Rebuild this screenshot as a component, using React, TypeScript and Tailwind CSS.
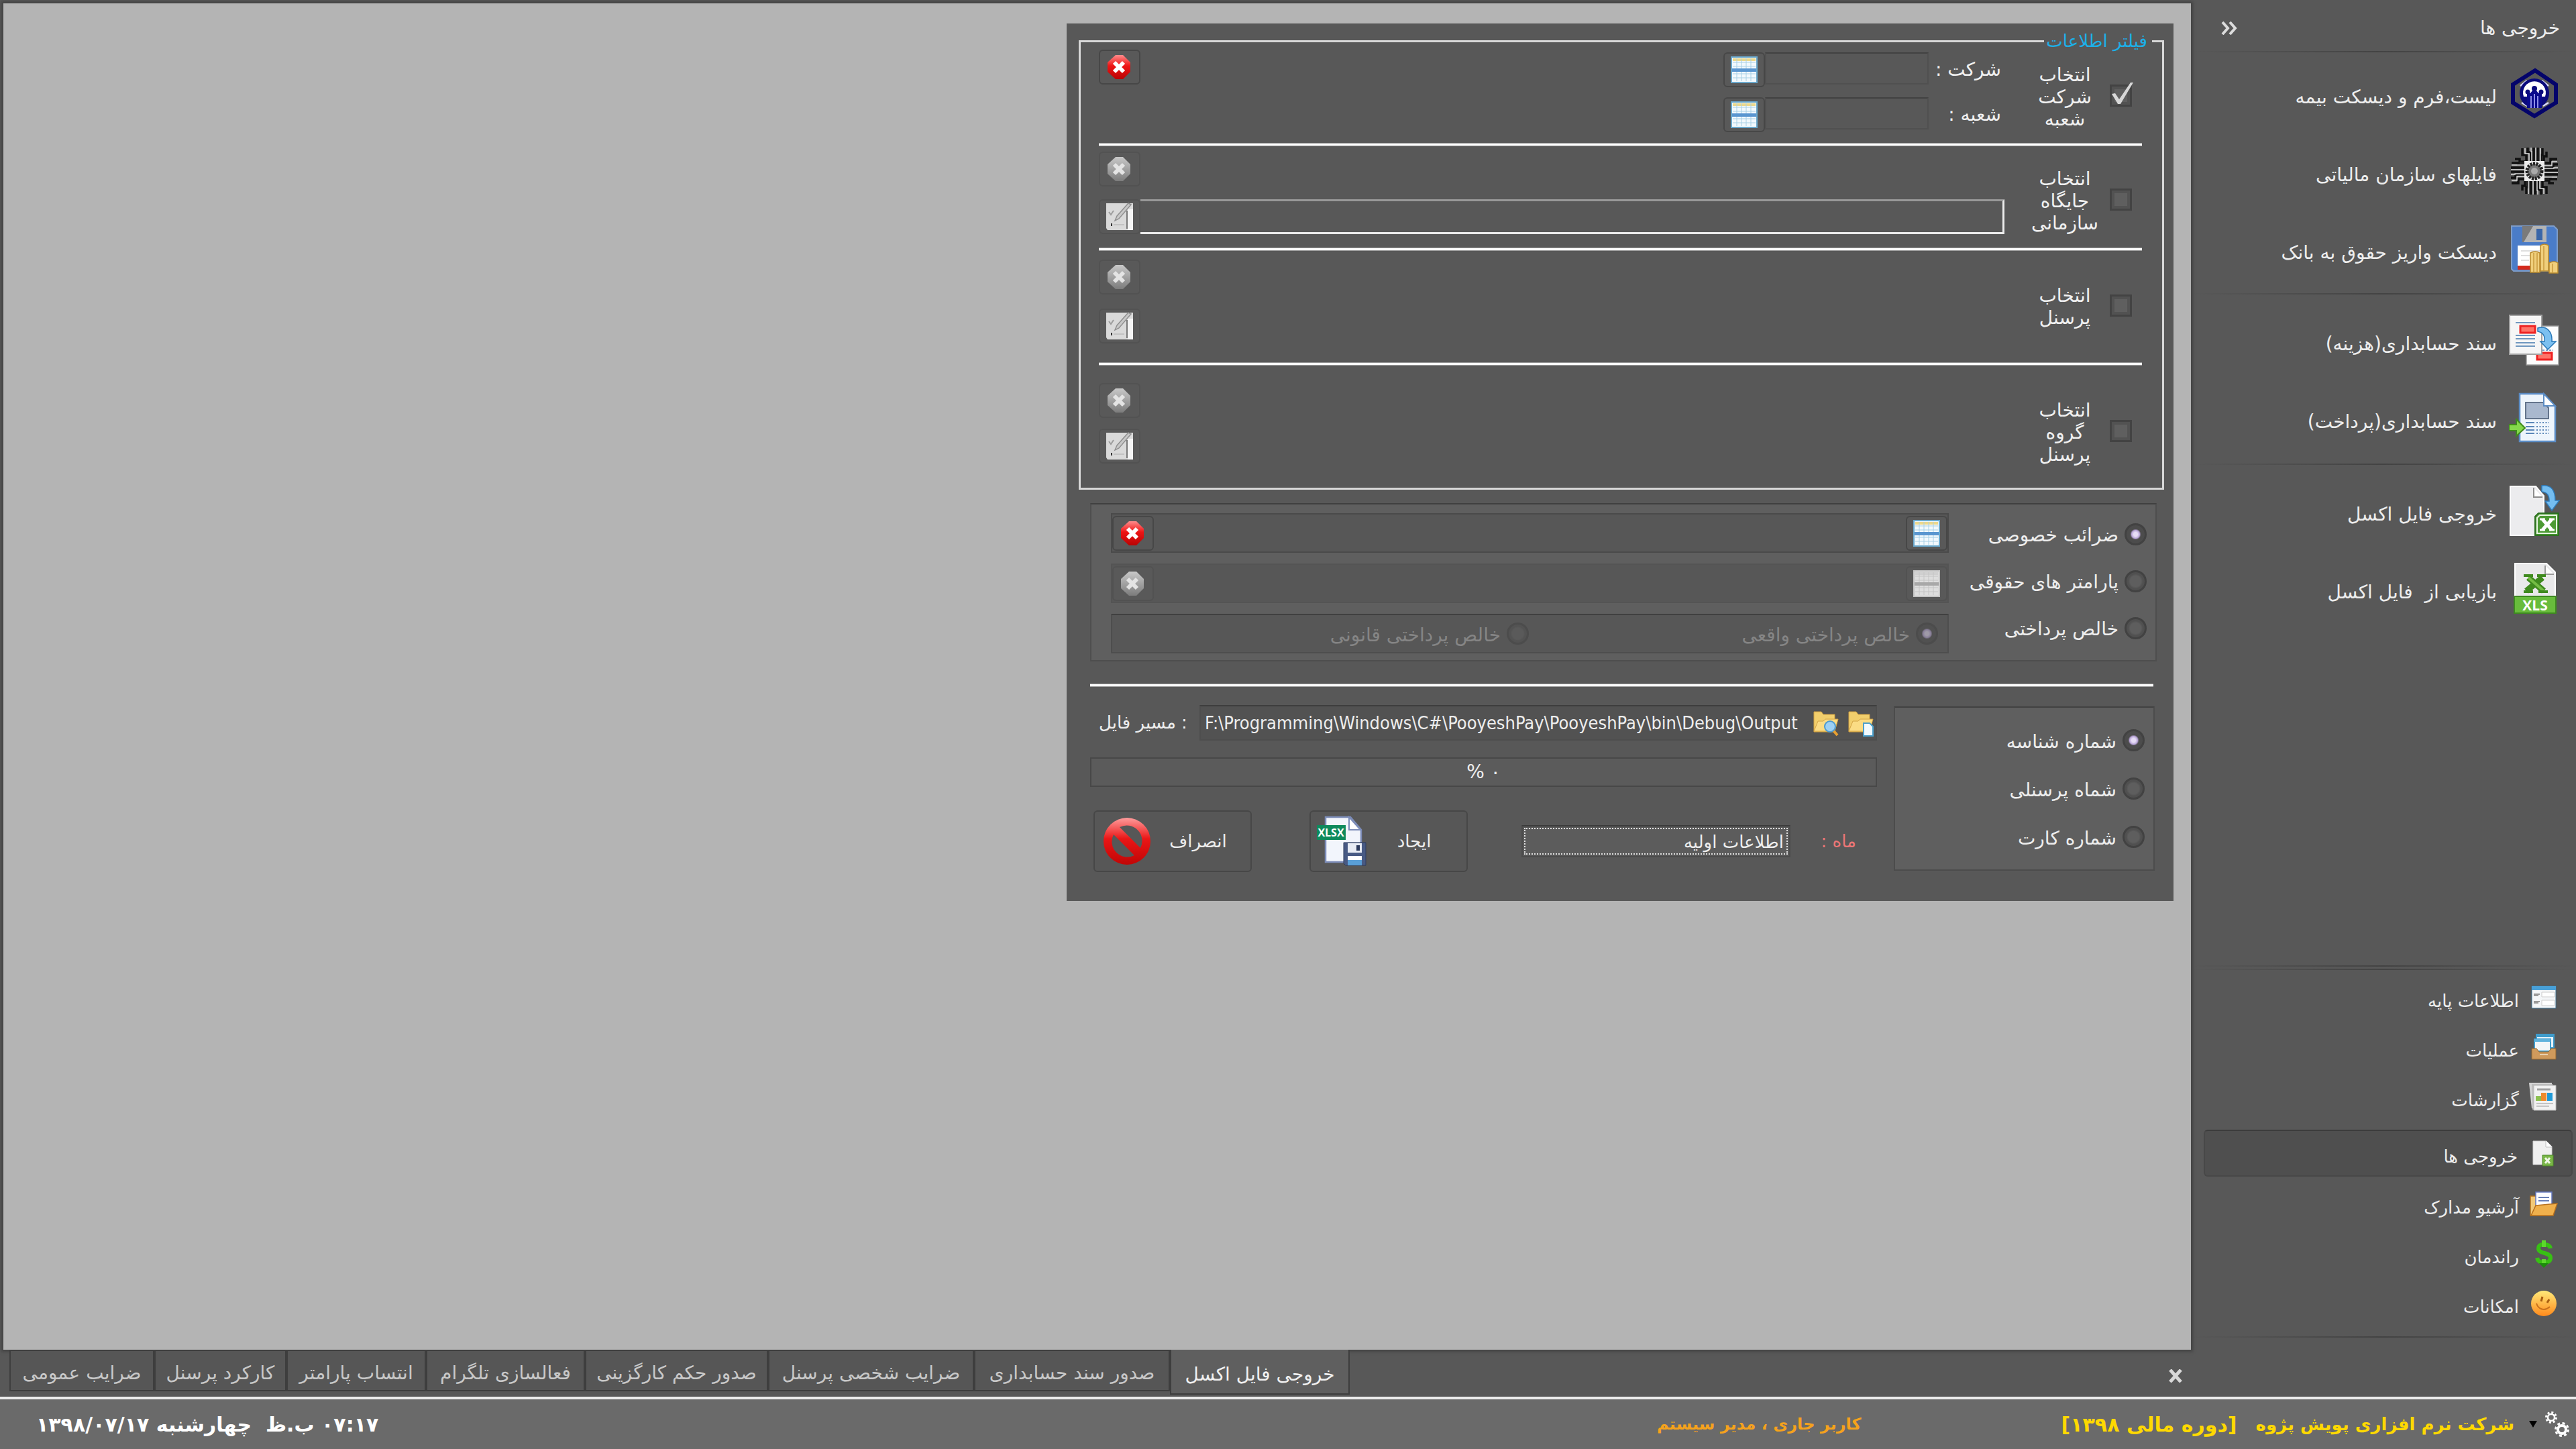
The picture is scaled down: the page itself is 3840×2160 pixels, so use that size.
/**
 * PayrollExport - Excel export screen
 * Side navigation, filter dialog, document tabs and status bar
 */

import type { ReactNode } from 'react';
import { clsx } from 'clsx';

/* ---------- Icons ---------- */

function InsuranceIcon() {
  return (
    <svg viewBox="0 0 76 76" className="size-[76px]">
      <path d="M39 4 70 25V52L38 72 6 52V25Z" fill="none" stroke="#04046a" strokeWidth="6" />
      <path d="M17 27 27 19M49 19 59 27M19 52 27 57M59 52 51 57" stroke="#d8d8ff" strokeWidth="2.5" />
      <circle cx="38" cy="38" r="22" fill="#0a0a7c" />
      <path d="M22 43a17 17 0 1 1 32 0Z" fill="#fff" />
      <path d="M27 38h5l3-4h6l3 4h5v22H27Z" fill="#0a0a8c" />
      <circle cx="38" cy="31" r="4" fill="#0a0a7c" />
      <circle cx="28" cy="36" r="3.5" fill="#0a0a7c" />
      <circle cx="48" cy="36" r="3.5" fill="#0a0a7c" />
      <path d="M33 42v18M38 39v21M43 42v18" stroke="#8f8fe8" strokeWidth="2" />
    </svg>
  );
}

function TaxIcon() {
  return (
    <svg viewBox="0 0 76 76" className="size-[76px]">
      {[0, 90, 180, 270].map((angle) => (
        <g key={angle} transform={`rotate(${angle} 38 38)`} fill="none">
          <path
            d="M20 4v10h6v12M28 3v7h5v14M37 3v22M43 3v20M50 4v10h-2v10M56 9v7h-4v8"
            stroke="#111"
            strokeWidth="3.5"
          />
          <path d="M24 4v8h6v12M33 3v6h1v16M40 3v22M47 4v19" stroke="#dcdcdc" strokeWidth="1.5" />
        </g>
      ))}
      <path d="M23 23h30v30H23Z" fill="#ececec" />
      <circle cx="38" cy="38" r="11" fill="#777" stroke="#222" strokeWidth="5" strokeDasharray="3 1.5" />
      <circle cx="38" cy="38" r="5" fill="#aaa" />
    </svg>
  );
}

function BankDiskIcon() {
  return (
    <svg viewBox="0 0 76 76" className="size-[76px]">
      <path d="M4 4h63l5 5v62H7l-3-3Z" fill="#4a7cc8" stroke="#7d9cc8" strokeWidth="2" />
      <path d="M20 4h36v24H20Z" fill="#b4b4b4" />
      <path d="M20 4h16L22 28h-2Z" fill="#7a7a7a" />
      <path d="M41 8h9v17h-9Z" fill="#3a66a8" />
      <path d="M13 33h46v36H13Z" fill="#fff" />
      <path d="M13 63h46v6H13Z" fill="#d42a1c" />
      <path d="M18 41h30M18 48h20M18 55h12" stroke="#d4d4d4" strokeWidth="1.5" />
      <g fill="#f0cf7c" stroke="#b98a2c" strokeWidth="1.5">
        <path d="M47 33q6-4 12 0v38H47Z" />
        <path d="M32 44q7-4 14 0v29H32Z" />
        <path d="M60 59q7-4 13 0v15H60Z" />
      </g>
      <path d="M37 44v28M42 44v29M52 34v37M65 60v13" stroke="#c79b3e" strokeWidth="1.5" />
    </svg>
  );
}

function CostDocIcon() {
  return (
    <svg viewBox="0 0 76 76" className="size-[76px]">
      <path d="M26 17h48v58H26Z" fill="#fdfdfd" stroke="#999" strokeWidth="1.5" />
      <path d="M50 53h16" stroke="#7fa3c8" strokeWidth="2" strokeDasharray="3 2" />
      <path d="M42 57h22v10H42Z" fill="#ff7468" stroke="#e22" strokeWidth="3" />
      <path d="M1 1h48v58H1Z" fill="#f6f6f6" stroke="#a4a4a4" strokeWidth="2" />
      <path d="M10 12h29M10 31h29M10 36h29M10 42h29M10 47h29" stroke="#6f97bf" strokeWidth="2" />
      <path d="M17 17h22v10H17Z" fill="#ff7468" stroke="#e22" strokeWidth="3" />
      <path d="M43 20c14-4 22 6 21 20h6L58 52 47 40h6c1-9-2-13-10-15Z" fill="#7cc0f0" stroke="#2878b8" strokeWidth="1.5" />
    </svg>
  );
}

function PaymentDocIcon() {
  return (
    <svg viewBox="0 0 76 76" className="size-[76px]">
      <path d="M16 2h36l17 19v52H16Z" fill="#eef5fc" stroke="#5b8cc4" strokeWidth="2.5" />
      <path d="M25 15h26l8 8v16H25Z" fill="#a9b8ce" stroke="#64748c" strokeWidth="2" />
      <path d="M52 2v18h17Z" fill="#fff" stroke="#5b8cc4" strokeWidth="2" />
      <path d="M25 45h13M25 51h13M25 56h13M25 61h13" stroke="#5a86b8" strokeWidth="2" />
      <path d="M41 45h19M41 51h19M41 56h19M41 61h19" stroke="#5a86b8" strokeWidth="2" strokeDasharray="2 2.5" />
      <path d="M0 48h11v-8l13 13-13 12v-8H0Z" fill="#84d84c" stroke="#3f8a1c" strokeWidth="2" />
    </svg>
  );
}

function ExcelExportIcon() {
  return (
    <svg viewBox="0 0 76 76" className="size-[76px]">
      <path d="M2 2h38l12 14v59H2Z" fill="#ececee" stroke="#fff" strokeWidth="2" />
      <path d="M37 4v14h13" fill="#fff" stroke="#8c8c8c" strokeWidth="2" />
      <path d="M49 1c14-2 20 7 20 22h6L64 38 54 24h6c0-9-3-13-11-14Z" fill="#74bdf0" stroke="#2f7ab8" strokeWidth="1.5" />
      <path d="M44 42h30v33H39V47Z" fill="#4c9a34" stroke="#2c7020" strokeWidth="2" />
      <path d="M46 45h25v27H42V49Z" fill="none" stroke="#e8f4e4" strokeWidth="2" />
      <path d="M50 51 64 67M64 51 50 67" stroke="#fff" strokeWidth="5" />
      <path d="M46 51h8M60 51h8M46 67h8M60 67h8" stroke="#fff" strokeWidth="3" />
    </svg>
  );
}

function XlsIcon() {
  return (
    <svg viewBox="0 0 76 76" className="size-[76px]">
      <path d="M9 1h47l13 13v61H9Z" fill="#e9e9ea" stroke="#fff" strokeWidth="2" />
      <path d="M54 4v13h13" fill="#fff" stroke="#9a9a9a" strokeWidth="2" />
      <path d="M8 50h62v25H8Z" fill="#68bc3c" stroke="#3e8a20" strokeWidth="2" />
      <path d="M29 22 52 42M50 22 26 42" stroke="#3f8a1e" strokeWidth="9" />
      <path d="M29 22 52 42" stroke="#74bd44" strokeWidth="4" />
      <path d="M22 19h14M42 19h13M22 43h14M44 43h14" stroke="#3f8a1e" strokeWidth="4" />
      <text x="39" y="71" textAnchor="middle" fontSize="21" fontWeight="bold" fill="#fff" fontFamily="Open Sans, sans-serif">
        XLS
      </text>
    </svg>
  );
}

function FormIcon() {
  return (
    <svg viewBox="0 0 44 44" className="size-11">
      <path d="M4 5h36v33H4Z" fill="#f4f6f8" stroke="#3a6a8a" strokeWidth="1" />
      <path d="M4 5h36v6H4Z" fill="#48a0d8" />
      <path d="M7 17h9M7 19h7M7 28h9M7 30h7" stroke="#9a9a9a" strokeWidth="2" />
      <path d="M19 14h19v7H19ZM19 26h19v8H19Z" fill="#fff" stroke="#ccc" />
    </svg>
  );
}

function InboxIcon() {
  return (
    <svg viewBox="0 0 44 44" className="size-11">
      <path d="M11 3h26v20H11Z" fill="#e8f4fa" stroke="#3f9ccc" strokeWidth="2" />
      <path d="M11 3h26v4H11Z" fill="#3f9ccc" />
      <path d="M8 10h24v18H8Z" fill="#f2f6f8" stroke="#3f9ccc" strokeWidth="2" />
      <path d="M8 10h24v4H8Z" fill="#5fb2dc" />
      <path d="M4 24h7l4 5h14l4-5h7v16H4Z" fill="#cf9a5c" stroke="#8f6430" strokeWidth="1" />
      <path d="M16 33h12" stroke="#e8d0b0" strokeWidth="2" />
    </svg>
  );
}

function ReportIcon() {
  return (
    <svg viewBox="0 0 44 44" className="size-11">
      <path d="M0 1h34v38H4Z" fill="#d4d4d4" />
      <path d="M4 3h31v38H5Z" fill="#bcbcbc" />
      <path d="M7 5h33v37H7Z" fill="#f1f1f1" stroke="#bbb" />
      <path d="M12 11h20" stroke="#a0a0a0" strokeWidth="3" />
      <path d="M10 21h8v7h-8Z" fill="#8cc050" />
      <path d="M18 16h8v12h-8Z" fill="#ee8a2c" />
      <path d="M27 16h8v12h-8Z" fill="#1f9ad8" />
      <path d="M11 32h25M11 36h19" stroke="#c4c4c4" strokeWidth="2" />
    </svg>
  );
}

function OutputsIcon() {
  return (
    <svg viewBox="0 0 44 44" className="size-11">
      <path d="M8 4h20l8 8v27H8Z" fill="#f0f0f0" stroke="#d4d4d4" />
      <path d="M27 4v9h9" fill="#fff" stroke="#c0c0c0" />
      <path d="M22 25h16v16H22Z" fill="#7ab648" stroke="#4c8a28" />
      <path d="M26 29 33 37M33 29 26 37" stroke="#eef8e4" strokeWidth="3" />
    </svg>
  );
}

function ArchiveIcon() {
  return (
    <svg viewBox="0 0 44 44" className="size-11">
      <path d="M2 10h9l3 3h18v26H2Z" fill="#f2c878" stroke="#b4701c" strokeWidth="1.5" />
      <path d="M10 4h24v24H10Z" fill="#fdfdff" stroke="#6478c0" strokeWidth="1.5" />
      <path d="M14 12h16M14 17h16" stroke="#6a80b8" strokeWidth="2" />
      <path d="M10 24l32-3-6 18H3Z" fill="#f0b04c" stroke="#b8701c" strokeWidth="1.5" />
    </svg>
  );
}

function DollarIcon() {
  return (
    <svg viewBox="0 0 44 44" className="size-11">
      <path
        d="M32 14C31 9 27 8 22 8c-6 0-8 2-8 6 0 9 18 5 18 14 0 5-4 7-10 7-6 0-9-2-10-7"
        fill="none"
        stroke="#38c014"
        strokeWidth="6"
      />
      <path d="M22 2v10M22 30v7" stroke="#5cd82c" strokeWidth="6" />
      <path d="M15 36h14l-7 7Z" fill="#1c8c0c" />
    </svg>
  );
}

function SmileIcon() {
  return (
    <svg viewBox="0 0 44 44" className="size-11">
      <defs>
        <linearGradient id="smile" x1="0" y1="0" x2="0" y2="1">
          <stop offset="0" stopColor="#ffe978" />
          <stop offset="1" stopColor="#ff8a1c" />
        </linearGradient>
      </defs>
      <circle cx="22" cy="22" r="19" fill="url(#smile)" />
      <path d="M20 12l-2 7M30 16l-3 5" stroke="#a85c10" strokeWidth="3" />
      <path d="M11 22c3 9 12 12 20 5" fill="none" stroke="#c8701c" strokeWidth="2" />
    </svg>
  );
}

function ClearIcon({ muted = false }: { muted?: boolean }) {
  return (
    <svg viewBox="0 0 38 38" className="size-[38px]">
      <defs>
        <linearGradient id="clear-on" x1="0" y1="0" x2="0" y2="1">
          <stop offset="0" stopColor="#ff8c8c" />
          <stop offset="0.45" stopColor="#ee1414" />
          <stop offset="1" stopColor="#b80404" />
        </linearGradient>
        <linearGradient id="clear-off" x1="0" y1="0" x2="0" y2="1">
          <stop offset="0" stopColor="#c8c8c8" />
          <stop offset="1" stopColor="#7c7c7c" />
        </linearGradient>
      </defs>
      <path d="M13 1h11l11 11v14L24 37H13L1 26V12Z" fill={muted ? 'url(#clear-off)' : 'url(#clear-on)'} />
      <path d="M11 12 25 26M25 12 11 26" stroke={muted ? '#e4e4e4' : '#fff'} strokeWidth="6" />
    </svg>
  );
}

function EditIcon() {
  return (
    <svg viewBox="0 0 42 42" className="size-[42px]">
      <path d="M1 1h40v40H3l-2-3Z" fill="#dadada" />
      <path d="M33 10h8v31h-8Z" fill="#f4f4f4" />
      <path d="M32 12v27" stroke="#777" strokeWidth="2" />
      <path d="M38 3 20 24l-6 3 3-7L34 1Z" fill="#c8c8c8" stroke="#909090" strokeWidth="1.5" />
      <path d="M5 14l3 4 4-6" fill="none" stroke="#9c9c9c" strokeWidth="2" />
      <path d="M9 31v4" stroke="#333" strokeWidth="2" />
      <path d="M12 33h16" stroke="#bbb" strokeWidth="1.5" />
    </svg>
  );
}

function GridIcon({ muted = false }: { muted?: boolean }) {
  return (
    <svg viewBox="0 0 40 40" className="size-10">
      <path d="M1 1h38v38H1Z" fill={muted ? '#dedede' : '#f2f9fd'} stroke={muted ? '#c4c4c4' : '#6aa8cc'} strokeWidth="2" />
      <path d="M3 3h34v4H3Z" fill={muted ? '#d0d0d0' : '#ecd88c'} />
      <path d="M9 3v34M16 3v34M23 3v34M30 3v34M3 9h34M3 15h34M3 26h34M3 32h34" stroke={muted ? '#c4c4c4' : '#a8d0e6'} />
      <path d="M2 18h36v5H2Z" fill={muted ? '#a8a8a8' : '#5a96d0'} />
    </svg>
  );
}

function FolderIcon({ kind }: { kind: 'search' | 'file' }) {
  return (
    <svg viewBox="0 0 40 40" className="size-10">
      <path d="M2 3h11l3 4h17v26H2Z" fill="#f2cf6c" stroke="#d0a040" strokeWidth="1" />
      <path d="M2 32 8 17h8l3-3h19l-5 18Z" fill="#fbdc84" stroke="#d4a444" strokeWidth="1" />
      {kind === 'search' ? (
        <>
          <path d="M31 31l6 7" stroke="#e8a030" strokeWidth="4" />
          <circle cx="26" cy="25" r="8" fill="#9cd0f4" stroke="#4c9ad0" strokeWidth="2" />
        </>
      ) : (
        <path d="M24 20h9l5 5v14H24Z" fill="#f2fafe" stroke="#4ca0cc" strokeWidth="2" />
      )}
    </svg>
  );
}

function ForbidIcon() {
  return (
    <svg viewBox="0 0 72 72" className="size-[72px]">
      <defs>
        <linearGradient id="forbid" x1="0" y1="0" x2="0" y2="1">
          <stop offset="0" stopColor="#ff9c9c" />
          <stop offset="0.45" stopColor="#ea1616" />
          <stop offset="1" stopColor="#c00606" />
        </linearGradient>
      </defs>
      <path
        fill="url(#forbid)"
        fillRule="evenodd"
        d="M36 1a35 35 0 1 1 0 70a35 35 0 0 1 0-70ZM25 15 56 46A23 23 0 0 0 25 15ZM16 26A23 23 0 0 0 47 57Z"
      />
    </svg>
  );
}

function XlsxSaveIcon() {
  return (
    <svg viewBox="0 0 76 76" className="size-[76px]">
      <path d="M14 2h37l16 19v48H14Z" fill="#f2f5fc" stroke="#7c8cb8" strokeWidth="2.5" />
      <path d="M49 2v19h17Z" fill="#fff" stroke="#7c8cb8" strokeWidth="2" />
      <path d="M1 14h43v22H1Z" fill="#0e8a5c" />
      <text x="22" y="31" textAnchor="middle" fontSize="16" fontWeight="bold" fill="#fff" fontFamily="Open Sans, sans-serif">
        XLSX
      </text>
      <path d="M41 40h33v34H44l-3-3Z" fill="#485a84" stroke="#2c3a5c" />
      <path d="M47 41h21v14H47Z" fill="#e8ecf4" />
      <path d="M60 44h5v8h-5Z" fill="#2c3a5c" />
      <path d="M47 60h21v14H47Z" fill="#fff" />
      <path d="M47 66h21v8H47Z" fill="#5aa0d8" />
    </svg>
  );
}

function ChevronsIcon() {
  return (
    <svg viewBox="0 0 24 20" className="h-5 w-6" fill="none" stroke="#dcdcdc" strokeWidth="4">
      <path d="M2 1 10 10 2 19M13 1 21 10 13 19" />
    </svg>
  );
}

function GearsIcon() {
  return (
    <svg viewBox="0 0 36 40" className="h-10 w-9" fill="none" stroke="#fff">
      <circle cx="9" cy="10" r="5" strokeWidth="2.5" />
      <circle cx="9" cy="10" r="7.5" strokeWidth="3" strokeDasharray="3 2.9" />
      <circle cx="25" cy="28" r="6" strokeWidth="4" />
      <circle cx="25" cy="28" r="9.5" strokeWidth="3" strokeDasharray="4 3.5" />
    </svg>
  );
}

/* ---------- Shared controls ---------- */

function ToolButton({ label, muted = false, children }: { label: string; muted?: boolean; children: ReactNode }) {
  return (
    <button
      type="button"
      aria-label={label}
      disabled={muted}
      className={clsx(
        'flex h-[52px] w-[62px] shrink-0 items-center justify-center rounded-md border-2 bg-[#595959]',
        muted ? 'border-[#525252]' : 'border-[#474747]'
      )}
    >
      {children}
    </button>
  );
}

interface RadioProps {
  name: string;
  label: string;
  checked?: boolean;
  disabled?: boolean;
  className?: string;
}

function Radio({ name, label, checked = false, disabled = false, className }: RadioProps) {
  return (
    <label className={clsx('flex items-center gap-[9px]', disabled ? 'text-[#858585]' : 'text-[#ededed]', className)}>
      <input
        type="radio"
        name={name}
        defaultChecked={checked}
        disabled={disabled}
        className="size-[33px] shrink-0 appearance-none rounded-full border-[3px] border-[#424242] bg-[radial-gradient(circle,#5e5e5e_0_8px,#505050_11px)] checked:bg-[radial-gradient(circle,#e6dcf6_0_3px,#b8a4d8_6px,#4c4c4c_8px)] disabled:opacity-50"
      />
      <span className="pt-1">{label}</span>
    </label>
  );
}

function Separator({ className }: { className?: string }) {
  return <hr className={clsx('h-[5px] border-y border-[#9a9a9a] bg-white', className)} />;
}

/* ---------- Side navigation ---------- */

const outputGroups = [
  {
    spacing: 'pt-[3px] pb-2',
    items: [
      { label: 'لیست،فرم و دیسکت بیمه', icon: <InsuranceIcon /> },
      { label: 'فایلهای سازمان مالیاتی', icon: <TaxIcon /> },
      { label: 'دیسکت واریز حقوق به بانک', icon: <BankDiskIcon /> },
    ],
  },
  {
    spacing: 'py-2.5',
    items: [
      { label: 'سند حسابداری(هزینه)', icon: <CostDocIcon /> },
      { label: 'سند حسابداری(پرداخت)', icon: <PaymentDocIcon /> },
    ],
  },
  {
    spacing: 'py-2.5',
    items: [
      { label: 'خروجی فایل اکسل', icon: <ExcelExportIcon /> },
      { label: 'بازیابی از  فایل اکسل', icon: <XlsIcon /> },
    ],
  },
];

const sections = [
  { label: 'اطلاعات پایه', icon: <FormIcon /> },
  { label: 'عملیات', icon: <InboxIcon /> },
  { label: 'گزارشات', icon: <ReportIcon /> },
  { label: 'خروجی ها', icon: <OutputsIcon />, active: true },
  { label: 'آرشیو مدارک', icon: <ArchiveIcon /> },
  { label: 'راندمان', icon: <DollarIcon /> },
  { label: 'امکانات', icon: <SmileIcon /> },
];

function FadeLine() {
  return <div className="h-0.5 bg-linear-to-r from-transparent via-[#434343] to-transparent" />;
}

function Sidebar() {
  return (
    <aside className="flex w-[574px] shrink-0 flex-col text-[#ededed]">
      <header className="flex h-[76px] items-center justify-between ps-6 pe-[45px] pt-2">
        <h1>خروجی ها</h1>
        <button type="button" aria-label="جمع کردن منو">
          <ChevronsIcon />
        </button>
      </header>
      <FadeLine />

      {outputGroups.map((group, index) => (
        <div key={index}>
          <nav className={group.spacing}>
            {group.items.map((item) => (
              <a key={item.label} href="#" className="flex h-[116px] items-center gap-[18px] ps-6 whitespace-pre">
                {item.icon}
                <span className="pt-3">{item.label}</span>
              </a>
            ))}
          </nav>
          {index < 2 && <FadeLine />}
        </div>
      ))}

      <div className="mt-auto">
        <FadeLine />
        <div className="h-[3px]" />
        <FadeLine />
        <nav className="ps-[5px] pe-[19px] pt-1 pb-3 text-[26px]">
          {sections.map((item) => (
            <a
              key={item.label}
              href="#"
              className={clsx(
                'flex items-center gap-[15px] ps-[21px]',
                item.active
                  ? 'mt-3 mb-1 h-[70px] rounded-md border-2 border-[#484848] border-t-[#3c3c3c] bg-[#4f4f4f]'
                  : 'h-[74px]'
              )}
            >
              {item.icon}
              <span className="pt-2.5">{item.label}</span>
            </a>
          ))}
        </nav>
        <FadeLine />
        <div className="h-[88px]" />
      </div>
    </aside>
  );
}

/* ---------- Filter fieldset ---------- */

interface FilterRowProps {
  lines: string[];
  checked?: boolean;
  labelClass?: string;
  className?: string;
  children: ReactNode;
}

function FilterRow({ lines, checked = false, labelClass, className, children }: FilterRowProps) {
  return (
    <div className="flex items-stretch gap-[38px]">
      <label className={clsx('flex items-center gap-[15px] ps-[15px]', labelClass)}>
        <span className="relative mb-1 size-[33px]">
          <input
            type="checkbox"
            defaultChecked={checked}
            className="block size-[33px] appearance-none border-[3px] border-[#434343] bg-[#5f5f5f] shadow-[inset_0_0_0_4px_#525252]"
          />
          {checked && (
            <svg viewBox="0 0 36 36" className="absolute -top-1 left-0 size-9">
              <path d="M3 18 8 17 14 26 31 1h4L16 33h-4Z" fill="#d8d8d8" />
            </svg>
          )}
        </span>
        <span className="w-[104px] text-center leading-[33px]">
          {lines.map((line) => (
            <span key={line} className="block">
              {line}
            </span>
          ))}
        </span>
      </label>
      <div className={clsx('flex min-w-0 flex-1 flex-col', className)}>{children}</div>
    </div>
  );
}

function PickerField({ id, label }: { id: string; label: string }) {
  return (
    <div className="flex">
      <label htmlFor={id} className="w-[113px] ps-[5px] leading-[52px] whitespace-nowrap">
        {label}
      </label>
      <input id={id} className="h-12 w-[244px] border-2 border-[#505050] border-t-[#424242] bg-transparent" />
      <ToolButton label={label}>
        <GridIcon />
      </ToolButton>
    </div>
  );
}

function FilterFieldset() {
  return (
    <fieldset className="mr-3.5 ml-[18px] min-w-0 border-[3px] border-[#d8d8d8] px-[15px] text-[#f0f0f0]">
      <legend className="ps-[7px] pe-[3px] text-[26px] leading-[22px] text-[#1cb0e8]">فیلتر اطلاعات</legend>
      <div className="ps-[15px] pe-3">
        <FilterRow lines={['انتخاب', 'شرکت', 'شعبه']} checked labelClass="pt-1" className="pt-0.5">
          <div className="flex h-[139px] justify-between">
            <div className="flex flex-col gap-[15px] pt-1">
              <PickerField id="company" label="شرکت :" />
              <PickerField id="branch" label="شعبه :" />
            </div>
            <ToolButton label="حذف">
              <ClearIcon />
            </ToolButton>
          </div>
        </FilterRow>
        <Separator />
        <FilterRow
          lines={['انتخاب', 'جایگاه', 'سازمانی']}
          labelClass="pt-3"
          className="items-end gap-[19px] pt-2 pb-5"
        >
          <ToolButton label="حذف" muted>
            <ClearIcon muted />
          </ToolButton>
          <div className="flex w-full">
            <div className="flex-1 border-[3px] border-l-0 border-[#ececec] border-t-[#989898]" />
            <ToolButton label="ویرایش" muted>
              <EditIcon />
            </ToolButton>
          </div>
        </FilterRow>
        <Separator />
        <FilterRow lines={['انتخاب', 'پرسنل']} className="items-end gap-[21px] pt-[13px] pb-7">
          <ToolButton label="حذف" muted>
            <ClearIcon muted />
          </ToolButton>
          <ToolButton label="ویرایش" muted>
            <EditIcon />
          </ToolButton>
        </FilterRow>
        <Separator />
        <FilterRow
          lines={['انتخاب', 'گروه', 'پرسنل']}
          labelClass="pt-4"
          className="items-end gap-4 pt-[26px] pb-9"
        >
          <ToolButton label="حذف" muted>
            <ClearIcon muted />
          </ToolButton>
          <ToolButton label="ویرایش" muted>
            <EditIcon />
          </ToolButton>
        </FilterRow>
      </div>
    </fieldset>
  );
}

/* ---------- Source and output ---------- */

function SourcePanel() {
  return (
    <section className="mt-5 mr-[25px] ml-[35px] flex border-2 border-[#4e4e4e] border-t-[#404040] bg-[#5f5f5f]">
      <div className="flex w-[308px] shrink-0 flex-col justify-center ps-[13px] pb-1 whitespace-nowrap">
        <Radio name="source" label="ضرائب خصوصی" checked className="h-[70px]" />
        <Radio name="source" label="پارامتر های حقوقی" className="h-[70px]" />
        <Radio name="source" label="خالص پرداختی" className="h-[70px]" />
      </div>
      <div className="flex flex-1 flex-col gap-4 pt-[13px] pe-[29px] pb-2.5">
        <div className="flex h-[59px] items-center justify-between border-2 border-[#4a4a4a] bg-[#575757]">
          <ToolButton label="انتخاب ضریب">
            <GridIcon />
          </ToolButton>
          <ToolButton label="حذف">
            <ClearIcon />
          </ToolButton>
        </div>
        <div className="flex h-[59px] items-center justify-between border-2 border-[#545454] bg-[#575757]">
          <ToolButton label="انتخاب پارامتر" muted>
            <GridIcon muted />
          </ToolButton>
          <ToolButton label="حذف" muted>
            <ClearIcon muted />
          </ToolButton>
        </div>
        <div className="flex h-[59px] items-center border-2 border-[#4e4e4e] border-t-[#404040] bg-[#575757] ps-3.5">
          <Radio name="net" label="خالص پرداختی واقعی" checked disabled className="w-[610px]" />
          <Radio name="net" label="خالص پرداختی قانونی" disabled />
        </div>
      </div>
    </section>
  );
}

function OutputPanel() {
  return (
    <section className="mt-[27px] mr-7 ml-[35px] flex items-center gap-[25px] text-[#ededed]">
      <div className="flex h-[245px] w-[389px] shrink-0 flex-col justify-center border-2 border-[#4c4c4c] border-t-[#424242] bg-[#5f5f5f] ps-[13px]">
        <Radio name="key" label="شماره شناسه" checked className="h-[72px]" />
        <Radio name="key" label="شماه پرسنلی" className="h-[72px]" />
        <Radio name="key" label="شماره کارت" className="h-[72px]" />
      </div>

      <div className="min-w-0 flex-1">
        <div dir="ltr" className="flex h-[53px] items-center">
          <label htmlFor="path" className="w-[163px] shrink-0 ps-[13px] text-[26px] whitespace-nowrap">
            مسیر فایل :
          </label>
          <div className="flex h-full min-w-0 flex-1 items-center border-2 border-[#4e4e4e] border-t-[#3e3e3e] bg-[#525252] ps-1.5">
            <input
              id="path"
              readOnly
              defaultValue="F:\Programming\Windows\C#\PooyeshPay\PooyeshPay\bin\Debug\Output"
              className="h-full min-w-0 flex-1 bg-transparent font-['DejaVu_Sans_Condensed','DejaVu_Sans',sans-serif] text-[27px]"
            />
            <button type="button" aria-label="جستجوی پوشه" className="ms-3">
              <FolderIcon kind="search" />
            </button>
            <button type="button" aria-label="باز کردن پوشه" className="ms-3 me-0.5">
              <FolderIcon kind="file" />
            </button>
          </div>
        </div>

        <div
          role="progressbar"
          aria-valuenow={0}
          dir="ltr"
          className="mt-[25px] h-11 border-2 border-[#484848] bg-[#5b5b5b] text-center leading-10"
        >
          % ۰
        </div>

        <div className="mt-[35px] flex items-center text-[26px]">
          <label htmlFor="month" className="w-[129px] ps-[31px] text-[#ec7676]">
            ماه :
          </label>
          <div className="w-[401px] border-2 border-[#4c4c4c] border-t-[#3c3c3c] p-0.5">
            <select id="month" className="block h-10 w-full appearance-none border-2 border-dotted border-[#e0e0e0] bg-[#5c5c5c] px-1">
              <option>اطلاعات اولیه</option>
            </select>
          </div>
          <button
            type="button"
            className="ms-20 flex h-[92px] w-[236px] flex-row-reverse items-center rounded-md border-2 border-[#474747] bg-[#575757] px-2"
          >
            <XlsxSaveIcon />
            <span className="flex-1 text-center">ایجاد</span>
          </button>
          <button
            type="button"
            className="ms-[86px] flex h-[92px] w-[236px] flex-row-reverse items-center rounded-md border-2 border-[#474747] bg-[#575757] ps-2 pe-3"
          >
            <ForbidIcon />
            <span className="flex-1 text-center">انصراف</span>
          </button>
        </div>
      </div>
    </section>
  );
}

/* ---------- Tabs and status bar ---------- */

const tabs = [
  { label: 'خروجی فایل اکسل', width: 'w-[268px]', active: true },
  { label: 'صدور سند حسابداری', width: 'w-[292px]' },
  { label: 'ضرایب شخصی پرسنل', width: 'w-[307px]' },
  { label: 'صدور حکم کارگزینی', width: 'w-[273px]' },
  { label: 'فعالسازی تلگرام', width: 'w-[237px]' },
  { label: 'انتساب پارامتر', width: 'w-[208px]' },
  { label: 'کارکرد پرسنل', width: 'w-[197px]' },
  { label: 'ضرایب عمومی', width: 'w-[216px]' },
];

function DocumentTabs() {
  return (
    <div className="flex h-[70px] items-start justify-between ps-[11px] pe-[9px]">
      <button type="button" aria-label="بستن" className="mt-[29px]">
        <svg viewBox="0 0 24 20" className="h-5 w-6">
          <path d="M4 1 20 19M20 1 4 19" stroke="#d8d8d8" strokeWidth="5" />
        </svg>
      </button>
      <div role="tablist" className="flex items-start">
        {tabs.map((tab) => (
          <button
            key={tab.label}
            type="button"
            role="tab"
            aria-selected={tab.active ?? false}
            className={clsx(
              'flex items-center justify-center border-2 border-[#3e3e3e] pt-2 whitespace-nowrap',
              tab.width,
              tab.active ? 'h-[67px] border-t-0 bg-[#5f5f5f] text-[#f0f0f0]' : 'h-[62px] bg-[#565656] text-[#c8c8c8]'
            )}
          >
            {tab.label}
          </button>
        ))}
      </div>
    </div>
  );
}

function StatusBar() {
  return (
    <footer className="flex h-[78px] shrink-0 items-center border-t-4 border-[#ececec] bg-[#6a6a6a] ps-2.5 text-[30px] font-bold whitespace-pre">
      <GearsIcon />
      <svg viewBox="0 0 12 10" className="ms-3 h-2.5 w-3">
        <path d="M0 0h12L6 10Z" fill="#000" />
      </svg>
      <span className="ms-[22px] text-[26px] text-[#ffd900]">شرکت نرم افزاری پویش پژوه</span>
      <span className="ms-7 text-[#ffd900]">[دوره مالی ۱۳۹۸]</span>
      <span className="ms-[298px] text-2xl text-[#f5a21c]">کاربر جاری ، مدیر سیستم</span>
      <time className="ms-auto me-[54px] text-white">۰۷:۱۷ ب.ظ  چهارشنبه ۱۳۹۸/۰۷/۱۷</time>
    </footer>
  );
}

export default function App() {
  return (
    <div dir="rtl" className="flex min-h-screen flex-col bg-[#585858] font-['DejaVu_Sans',sans-serif] text-[28px]">
      <div className="flex flex-1">
        <Sidebar />
        <div className="flex min-w-0 flex-1 flex-col pt-[5px] pl-[5px]">
          <main className="flex-1 bg-[#b4b4b4] pt-[30px] pr-[26px] shadow-[0_0_4px_3px_#444]">
            <div className="w-full max-w-[1650px] bg-[#585858] pt-[15px] pb-[43px]">
              <FilterFieldset />
              <SourcePanel />
              <Separator className="mt-[33px] mr-[30px] ml-[35px]" />
              <OutputPanel />
            </div>
          </main>
          <DocumentTabs />
        </div>
      </div>
      <StatusBar />
    </div>
  );
}
